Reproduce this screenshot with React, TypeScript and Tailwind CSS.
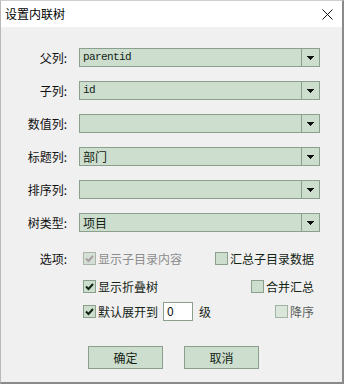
import type { ReactNode } from 'react';

const CJK = { fontFamily: '"Noto Sans CJK SC", "Liberation Sans", sans-serif' };

function Arrow() {
  return (
    <svg width="7" height="4" viewBox="0 0 7 4" className="block">
      <path d="M0 0h7v1H0zM1 1h5v1H1zM2 2h3v1H2zM3 3h1v1H3z" fill="#111" />
    </svg>
  );
}

function Combo({ value, mono }: { value?: string; mono?: boolean }) {
  return (
    <div className="ml-[12px] flex h-[19px] w-[241px] border border-[#8ba08c] bg-[#cddecf]">
      <div
        className={`flex flex-1 items-center pl-[3px] text-[#142414] ${mono ? 'text-[11px] tracking-[-0.6px]' : 'text-[12px]'}`}
        style={mono ? { fontFamily: '"Liberation Mono", monospace' } : CJK}
      >
        {value}
      </div>
      <div className="flex w-[18px] items-center justify-center border-l border-[#8ba08c]">
        <Arrow />
      </div>
    </div>
  );
}

function Row({ label, children }: { label: string; children: ReactNode }) {
  return (
    <div className="mb-[14px] flex h-[19px] items-center">
      <div className="w-[66px] text-right text-[12px] text-[#111]">{label}</div>
      {children}
    </div>
  );
}

function Check({ checked, disabled, faint }: { checked?: boolean; disabled?: boolean; faint?: boolean }) {
  const box = disabled
    ? 'border-[#a9b6a9] bg-[#d6dfd6]'
    : faint
      ? 'border-[#a3b3a3] bg-[#dbe6db]'
      : 'border-[#8ba08c] bg-[#cddecf]';
  return (
    <div className={`flex h-[13px] w-[13px] shrink-0 items-center justify-center border ${box}`}>
      {checked && (
        <svg width="9" height="8" viewBox="0 0 9 8">
          <path
            d="M1 3.5l2.5 2.5L8 1"
            fill="none"
            stroke={disabled ? '#a99fa2' : '#142414'}
            strokeWidth="2"
          />
        </svg>
      )}
    </div>
  );
}

function Option({
  label,
  checked,
  disabled,
  faint,
}: {
  label: string;
  checked?: boolean;
  disabled?: boolean;
  faint?: boolean;
}) {
  const color = disabled ? 'text-[#8c8c8c]' : faint ? 'text-[#5a5f5a]' : 'text-[#142414]';
  return (
    <div className="flex items-center gap-[2px]">
      <Check checked={checked} disabled={disabled} faint={faint} />
      <span className={`text-[12px] leading-none ${color}`}>{label}</span>
    </div>
  );
}

export default function App() {
  return (
    <div
      className="flex h-[384px] w-[344px] flex-col border-t border-l border-r-2 border-b-2 border-t-[#cfcfcf] border-l-[#b9b9b9] border-r-[#8a8a8a] border-b-[#8a8a8a] bg-[#f0f0f0]"
      style={CJK}
    >
      <div className="flex h-[26px] items-center justify-between bg-white pl-[4px] pr-[9px]">
        <span className="text-[12px] text-black">设置内联树</span>
        <svg width="11" height="11" viewBox="0 0 11 11">
          <path d="M0.5 0.5l10 10M10.5 0.5l-10 10" stroke="#111" strokeWidth="1" />
        </svg>
      </div>

      <div className="flex flex-1 flex-col pt-[21px]">
        <Row label="父列:">
          <Combo value="parentid" mono />
        </Row>
        <Row label="子列:">
          <Combo value="id" mono />
        </Row>
        <Row label="数值列:">
          <Combo />
        </Row>
        <Row label="标题列:">
          <Combo value="部门" />
        </Row>
        <Row label="排序列:">
          <Combo />
        </Row>
        <Row label="树类型:">
          <Combo value="项目" />
        </Row>

        <div className="mt-[6px] flex">
          <div className="w-[66px] pt-[1px] text-right text-[12px] leading-none text-[#111]">选项:</div>
          <div className="ml-[16px] flex w-[231px] flex-col">
            <div className="flex h-[13px] items-center justify-between">
              <Option label="显示子目录内容" checked disabled />
              <Option label="汇总子目录数据" />
            </div>
            <div className="mt-[15px] flex h-[13px] items-center justify-between">
              <Option label="显示折叠树" checked />
              <Option label="合并汇总" />
            </div>
            <div className="mt-[9px] flex h-[19px] items-center justify-between">
              <div className="flex items-center">
                <Option label="默认展开到" checked />
                <div className="ml-[5px] flex h-[19px] w-[30px] items-start border border-[#8ba08c] bg-white pl-[3px] pt-[2px] text-[12px] leading-none text-[#111]">
                  0
                </div>
                <span className="ml-[6px] text-[12px] leading-none text-[#142414]">级</span>
              </div>
              <Option label="降序" faint />
            </div>
          </div>
        </div>

        <div className="mt-[25px] flex gap-[21px] pl-[87px]">
          <button className="flex h-[23px] w-[75px] items-center justify-center border border-[#8ba08c] bg-[#cddecf] text-[12px] text-[#142414]">
            确定
          </button>
          <button className="flex h-[23px] w-[75px] items-center justify-center border border-[#8ba08c] bg-[#cddecf] text-[12px] text-[#142414]">
            取消
          </button>
        </div>
      </div>
    </div>
  );
}
